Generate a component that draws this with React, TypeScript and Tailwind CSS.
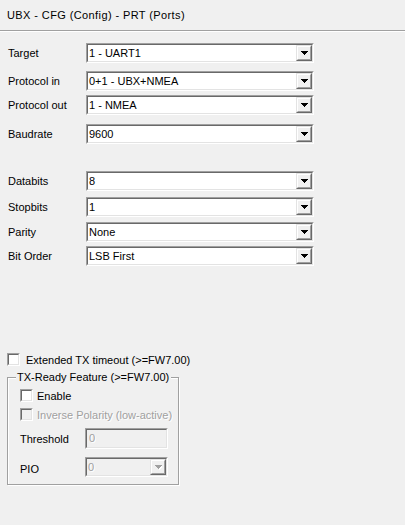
import React from "react";

function Arrow({ disabled = false }: { disabled?: boolean }) {
  return (
    <svg width="7" height="5" viewBox="0 0 7 5" shapeRendering="crispEdges">
      {disabled && (
        <path d="M1 1h7v1h-1v1h-1v1h-1v1h-1v-1h-1v-1h-1v-1h-1z" fill="#ffffff" />
      )}
      <path
        d="M0 0h7v1h-1v1h-1v1h-1v1h-1v-1h-1v-1h-1v-1h-1z"
        fill={disabled ? "#a0a0a0" : "#000000"}
      />
    </svg>
  );
}

function DropButton({ disabled = false }: { disabled?: boolean }) {
  return (
    <div className="w-[16px] h-full shrink-0 border border-t-[#e3e3e3] border-l-[#e3e3e3] border-r-[#696969] border-b-[#696969]">
      <div className="h-full flex items-center justify-center bg-[#f0f0f0] border border-t-white border-l-white border-r-[#a0a0a0] border-b-[#a0a0a0]">
        <Arrow disabled={disabled} />
      </div>
    </div>
  );
}

function Combo({
  value,
  disabled = false,
  wide = true,
}: {
  value: string;
  disabled?: boolean;
  wide?: boolean;
}) {
  return (
    <div
      className={`${wide ? "w-[228px]" : "w-[83px]"} h-[20px] shrink-0 border border-t-[#a0a0a0] border-l-[#a0a0a0] border-r-white border-b-white`}
    >
      <div
        className={`flex h-full border border-t-[#696969] border-l-[#696969] border-r-[#e3e3e3] border-b-[#e3e3e3] ${
          disabled ? "bg-[#f0f0f0]" : "bg-white"
        }`}
      >
        <div
          className={`flex-1 pl-[1px] leading-[16px] ${
            disabled ? "text-[#a0a0a0] [text-shadow:1px_1px_0_#ffffff]" : "text-black"
          }`}
        >
          {value}
        </div>
        <DropButton disabled={disabled} />
      </div>
    </div>
  );
}

function Check({ disabled = false }: { disabled?: boolean }) {
  return (
    <div className="w-[13px] h-[13px] shrink-0 border border-t-[#a0a0a0] border-l-[#a0a0a0] border-r-white border-b-white">
      <div
        className={`h-full border border-t-[#696969] border-l-[#696969] border-r-[#e3e3e3] border-b-[#e3e3e3] ${
          disabled ? "bg-[#f0f0f0]" : "bg-white"
        }`}
      />
    </div>
  );
}

function Row({ label, value, mt }: { label: string; value: string; mt: string }) {
  return (
    <div className={`flex items-center h-[20px] pl-[8px] ${mt}`}>
      <span className="w-[78px] shrink-0 leading-[14px]">{label}</span>
      <Combo value={value} />
    </div>
  );
}

export default function App() {
  return (
    <div className="w-[405px] h-[525px] overflow-hidden bg-[#f0f0f0] text-[11px] text-black font-['Liberation_Sans',Arial,sans-serif]">
      <div className="h-[30px] pt-[8px] pl-[7px] leading-[14px] tracking-[0.4px]">
        UBX - CFG (Config) - PRT (Ports)
      </div>
      <div className="h-[1px] bg-[#a0a0a0]" />
      <div className="h-[1px] bg-white" />

      <Row label="Target" value="1 - UART1" mt="mt-[11px]" />
      <Row label="Protocol in" value="0+1 - UBX+NMEA" mt="mt-[8px]" />
      <Row label="Protocol out" value="1 - NMEA" mt="mt-[4px]" />
      <Row label="Baudrate" value="9600" mt="mt-[9px]" />

      <Row label="Databits" value="8" mt="mt-[27px]" />
      <Row label="Stopbits" value="1" mt="mt-[6px]" />
      <Row label="Parity" value="None" mt="mt-[5px]" />
      <Row label="Bit Order" value="LSB First" mt="mt-[4px]" />

      <div className="flex items-center h-[13px] mt-[87px] pl-[7px]">
        <Check />
        <span className="ml-[6px] leading-[14px]">Extended TX timeout (&gt;=FW7.00)</span>
      </div>

      <div className="relative ml-[7px] mt-[11px] w-[172px] h-[108px] border border-[#a0a0a0] shadow-[inset_1px_1px_0_#ffffff,1px_1px_0_#ffffff]">
        <span className="absolute left-[8px] top-[-8px] pl-[1px] pr-[2px] bg-[#f0f0f0] leading-[14px] whitespace-nowrap">
          TX-Ready Feature (&gt;=FW7.00)
        </span>
        <div className="pt-[11px] pl-[12px]">
          <div className="flex items-center h-[13px]">
            <Check />
            <span className="ml-[4px] leading-[14px]">Enable</span>
          </div>
          <div className="flex items-center h-[13px] mt-[6px]">
            <Check disabled />
            <span className="ml-[4px] leading-[14px] text-[#a0a0a0] [text-shadow:1px_1px_0_#ffffff] whitespace-nowrap">
              Inverse Polarity (low-active)
            </span>
          </div>
          <div className="flex items-center h-[21px] mt-[7px]">
            <span className="w-[65px] shrink-0 leading-[14px]">Threshold</span>
            <div className="w-[83px] h-[21px] border border-t-[#a0a0a0] border-l-[#a0a0a0] border-r-white border-b-white">
              <div className="h-full bg-[#f0f0f0] border border-t-[#696969] border-l-[#696969] border-r-[#e3e3e3] border-b-[#e3e3e3] pl-[2px] leading-[17px] text-[#a0a0a0] [text-shadow:1px_1px_0_#ffffff]">
                0
              </div>
            </div>
          </div>
          <div className="flex items-center h-[20px] mt-[8px]">
            <span className="w-[65px] shrink-0 leading-[14px] pt-[3px]">PIO</span>
            <Combo value="0" disabled wide={false} />
          </div>
        </div>
      </div>
    </div>
  );
}
